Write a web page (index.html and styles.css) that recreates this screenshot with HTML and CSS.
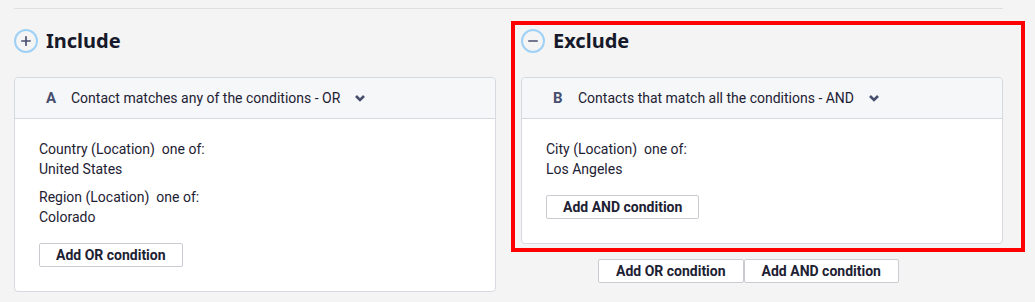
FILE: index.html
```html
<!DOCTYPE html>
<html lang="en">
<head>
    <meta charset="UTF-8">
    <meta name="viewport" content="width=device-width, initial-scale=1.0">
    <title>Segment conditions</title>
    <link rel="stylesheet" href="styles.css">
</head>
<body>
    <div class="segment">
        <div class="column">
            <h2 class="group-title">
                <span class="round-icon">
                    <svg viewBox="0 0 24 24" width="24" height="24"><path d="M7 12h10M12 7v10" stroke="#474e6e" stroke-width="2" stroke-linecap="round"/></svg>
                </span>
                Include
            </h2>
            <div class="card">
                <div class="card-head">
                    <span class="letter">A</span>
                    <span>Contact matches any of the conditions - OR</span>
                    <svg class="chevron" viewBox="0 0 12 8" width="12" height="8"><path d="M2 2l4 4 4-4" fill="none" stroke="#474e6e" stroke-width="2.6"/></svg>
                </div>
                <div class="card-body">
                    <div class="condition">
                        <div>Country (Location) &nbsp;one of:</div>
                        <div>United States</div>
                    </div>
                    <div class="condition">
                        <div>Region (Location) &nbsp;one of:</div>
                        <div>Colorado</div>
                    </div>
                    <button class="btn">Add OR condition</button>
                </div>
            </div>
        </div>
        <div class="column">
            <div class="highlight"></div>
            <h2 class="group-title">
                <span class="round-icon">
                    <svg viewBox="0 0 24 24" width="24" height="24"><path d="M7 12h10" stroke="#474e6e" stroke-width="2" stroke-linecap="round"/></svg>
                </span>
                Exclude
            </h2>
            <div class="card">
                <div class="card-head">
                    <span class="letter">B</span>
                    <span>Contacts that match all the conditions - AND</span>
                    <svg class="chevron" viewBox="0 0 12 8" width="12" height="8"><path d="M2 2l4 4 4-4" fill="none" stroke="#474e6e" stroke-width="2.6"/></svg>
                </div>
                <div class="card-body">
                    <div class="condition">
                        <div>City (Location) &nbsp;one of:</div>
                        <div>Los Angeles</div>
                    </div>
                    <button class="btn">Add AND condition</button>
                </div>
            </div>
            <div class="btn-group">
                <button class="btn">Add OR condition</button>
                <button class="btn">Add AND condition</button>
            </div>
        </div>
    </div>
</body>
</html>
```

FILE: styles.css
```css
:root {
    --text: #1d2133;
    --muted: #474e6e;
    --border: #d6d9df;
    --bg: #f4f4f4;
}
body {
    margin: 0;
    padding: 8px 32px 0 14px;
    background-color: var(--bg);
    color: var(--text);
    font-family: Roboto, "Noto Sans", Arial, sans-serif;
    font-size: 14px;
    line-height: 20px;
}
.segment {
    border-top: 1px solid #dedfe1;
    padding-top: 20px;
    display: grid;
    grid-template-columns: 482px 482px;
    column-gap: 25px;
    align-items: start;
}
.column { position: relative; }
.highlight {
    position: absolute;
    left: -10px;
    top: -8px;
    width: 514px;
    height: 231px;
    box-sizing: border-box;
    border: 4px solid #ff0000;
    pointer-events: none;
}
.group-title {
    display: flex;
    align-items: center;
    gap: 8px;
    margin: 0 0 24px;
    font-family: "Noto Sans", Roboto, sans-serif;
    font-size: 20px;
    line-height: 24px;
    font-weight: 700;
    color: #16192a;
}
.round-icon {
    width: 24px;
    height: 24px;
    box-sizing: border-box;
    border: 2px solid #9fd1f7;
    border-radius: 50%;
    display: flex;
    align-items: center;
    justify-content: center;
}
.round-icon svg { width: 20px; height: 20px; }
.card {
    background-color: #fff;
    border: 1px solid var(--border);
    border-radius: 4px;
}
.card-head {
    display: flex;
    align-items: center;
    height: 40px;
    padding-left: 31px;
    background-color: #f6f7f9;
    border-bottom: 1px solid var(--border);
    border-radius: 4px 4px 0 0;
}
.letter {
    font-weight: 700;
    color: var(--muted);
    font-size: 15px;
    width: 25px;
}
.chevron { margin-left: 14px; }
.card-body { padding: 20px 24px 24px; }
.condition { margin-bottom: 8px; }
.condition + .btn { margin-top: 8px; }
.btn {
    font-family: inherit;
    font-size: 14px;
    font-weight: 700;
    color: var(--text);
    background-color: #fff;
    border: 1px solid #caccd2;
    border-radius: 2px;
    height: 24px;
    padding: 0 16px;
    line-height: 20px;
    cursor: pointer;
}
.btn-group {
    display: flex;
    margin: 15px 0 0 77px;
}
.btn-group .btn { padding: 0 17px; }
```
